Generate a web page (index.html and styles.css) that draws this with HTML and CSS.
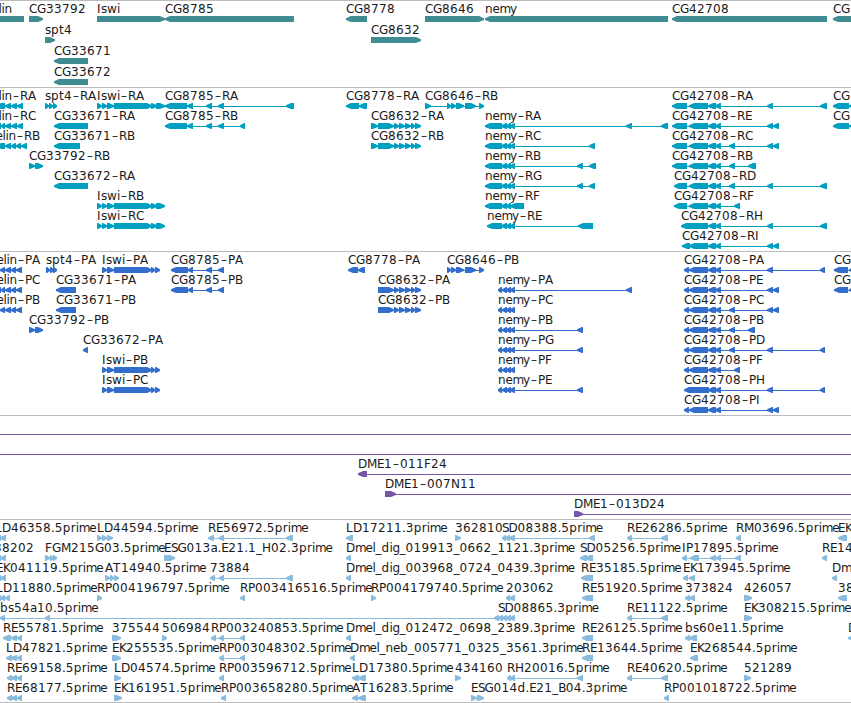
FILE: index.html
```html
<!DOCTYPE html>
<html lang="en">
<head>
<meta charset="utf-8">
<title>Genome tracks</title>
<link rel="stylesheet" href="styles.css">
</head>
<body>
<main class="browser" id="browser"></main>
<script src="tracks.js"></script>
</body>
</html>
```
FILE: styles.css
```css
body {
  margin: 0;
  background: #fff;
  overflow: hidden;
}

.browser {
  display: flex;
  flex-direction: column;
  width: 851px;
  border-bottom: 1px solid #bbb;
}

.track {
  border-top: 1px solid #bbb;
}

.track svg {
  display: block;
  overflow: visible;
}

.track text {
  font-family: "DejaVu Sans", sans-serif;
  font-size: 12px;
  fill: #1a1a1a;
}

.gene { fill: #408c93; }
.transcript { fill: #009fbf; }
.protein { fill: #336ecc; }
.clone { fill: #7755a8; }
.est { fill: #88bbdd; }
```
FILE: tracks.js
```js
// Each row lists features as "label@labelStart direction blocks".
const exonsR = '708-716,715-721';
const iswiR = '97-102,102-107,107-114,114-152,151-157,156-165';
const iswiP = '102-107,107-114,114-152,151-155,155-160';
const cg8632 = '378-394,394-399,399-405,405-411,411-415,415-421';
const nemyR = '485-502,501-507,506-511,510-515';
const nemyP = '498-502,502-507,506-511,510-515';
const cgR = '672-687,689-708,' + exonsR;
const cgD = '674-687,689-708,' + exonsR;
const cgP = '684-689,689-708,' + exonsR;

const tracks = [
  { kind: 'gene', pitch: 21, height: 86, rows: [
    ['elin@-8.5 l -10-24', 'CG33792@29 r 29-43', 'Iswi@97 r 97-165', 'CG8785@165 l 165-294', 'CG8778@346 l 346-367', 'CG8646@425 r 425-484', 'nemy@485 l 485-668', 'CG42708@672 l 672-827', 'CG@833 l 833-860'],
    ['spt4@45 r 45-55', 'CG8632@371 r 371-421'],
    ['CG33671@54 l 54-88'],
    ['CG33672@54 l 54-88']
  ] },
  { kind: 'transcript', pitch: 20, height: 163, rows: [
    ['elin-RA@-8.5 l -4-5,5-11,11-17,17-23', 'spt4-RA@45 r 45-49,49-53,53-57', 'Iswi-RA@97 r ' + iswiR, 'CG8785-RA@165 l 165-187,187-193,206-212,218-224,286-294', 'CG8778-RA@346 l 346-359,359-367', 'CG8646-RB@425 r 425-431,447-451,451-456,456-464,465-476,479-484', `CG42708-RA@672 l ${cgR},767-773,820-827`, 'CG@833 l 833-849,849-860'],
    ['elin-RC@-8.5 l -4-1,1-5,5-11,11-17,17-23', 'CG33671-RA@54 l 54-88', 'CG8785-RB@165 l 165-187,187-193,206-212,218-224,240-245', 'CG8632-RA@371 r 371-378,' + cg8632, `nemy-RA@485 l ${nemyR},626-632,661-668`, `CG42708-RE@672 l ${cgR},767-773,773-779`, 'CG@833 l 833-849,849-860'],
    ['elin-RB@-4.5 l -4-5,5-11,11-16,16-21,21-27', 'CG33671-RB@54 l 54-80', 'CG8632-RB@371 r 371-378,' + cg8632, `nemy-RC@485 l ${nemyR},589-595`, `CG42708-RC@672 l ${cgR},729-735,767-773,773-779`],
    ['CG33792-RB@29 r 29-35,35-43', `nemy-RB@485 l ${nemyR},577-583,589-596`, `CG42708-RB@672 l ${cgR},729-735,748-756`],
    ['CG33672-RA@54 l 54-88', `nemy-RG@485 l ${nemyR},577-583,589-595`, `CG42708-RD@674 l ${cgD},729-735,767-773,820-827`],
    ['Iswi-RB@97 r ' + iswiR, 'nemy-RF@485 l 485-502,501-507,506-511,510-524', `CG42708-RF@674 l ${cgD},734-740`],
    ['Iswi-RC@97 r ' + iswiR, 'nemy-RE@487 l 487-502,501-507,506-511,510-515,578-593', `CG42708-RH@681 l 681-708,${exonsR},767-773,820-827`],
    [`CG42708-RI@682 l 682-690,689-708,${exonsR},767-773,773-779`]
  ] },
  { kind: 'protein', pitch: 20, height: 163, rows: [
    ['elin-PA@-3.5 l -4-0,0-5,5-11,11-16,16-22', 'spt4-PA@46 r 46-50,50-54,53-57', 'Iswi-PA@102 r ' + iswiP, 'CG8785-PA@171 l 171-188,188-193,206-212,218-224', 'CG8778-PA@348 l 348-358,358-365', 'CG8646-PB@447 r 447-451,451-456,456-464,465-476,479-484', `CG42708-PA@684 l ${cgP},767-773,820-825`, 'CG@834 l 834-848,849-860'],
    ['elin-PC@-3.5 l -4-1,1-5,5-11,11-16,16-22', 'CG33671-PA@56 l 56-76', 'CG8785-PB@171 l 171-188,188-193,206-212,218-224', 'CG8632-PA@378 r ' + cg8632, `nemy-PA@498 l ${nemyP},626-632`, `CG42708-PE@684 l ${cgP},767-773,773-779`, 'CG@834 l 834-848,849-860'],
    ['elin-PB@-3.5 l -4-0,0-5,5-11,11-16,16-22', 'CG33671-PB@56 l 56-76', 'CG8632-PB@378 r ' + cg8632, `nemy-PC@498 l ${nemyP}`, `CG42708-PC@684 l ${cgP},729-735,767-773,773-779`],
    ['CG33792-PB@29 r 29-35,35-43', `nemy-PB@498 l ${nemyP},577-583`, `CG42708-PB@684 l ${cgP},729-735,748-755`],
    ['CG33672-PA@83 l 83-88', `nemy-PG@498 l ${nemyP},577-583`, `CG42708-PD@684 l ${cgP},729-735,767-773,820-825`],
    ['Iswi-PB@102 r ' + iswiP, `nemy-PF@498 l ${nemyP}`, `CG42708-PF@684 l ${cgP},734-740`],
    ['Iswi-PC@102 r ' + iswiP, `nemy-PE@498 l ${nemyP},577-583`, `CG42708-PH@684 l 684-709,${exonsR},767-773,820-825`],
    [`CG42708-PI@684 l ${cgP},767-773,773-779`]
  ] },
  { kind: 'clone', pitch: 20, height: 103, rows: [
    ['@0 l -20--10,870-880'],
    ['@0 l -20--10,870-880'],
    ['DME1-011F24@358 l 358-367,870-880'],
    ['DME1-007N11@385 r 385-396,870-880'],
    ['DME1-013D24@574 r 574-583,870-880']
  ] },
  { kind: 'est', pitch: 20, height: 182, rows: [
    ['LD46358.5prime@-5 l -4-1,0-6', 'LD44594.5prime@97 r 97-102,102-107,107-113', 'RE56972.5prime@208 l 208-214,219-224,286-293', 'LD17211.3prime@346 l 346-353', '362810@455 r 455-461', 'SD08388.5prime@502 l 502-506,505-510,509-515,589-595', 'RE26286.5prime@627 l 627-632,661-668', 'RM03696.5prime@736 l 736-741', 'EK@838 l 838-847'],
    ['38202@-6 l -4-1,0-6', 'FGM215G03.5prime@45 r 45-50,50-54,53-57', 'ESG013a.E21.1_H02.3prime@164 r 164-175', 'Dmel_dig_019913_0662_1121.3prime@346 l 346-351', 'SD05256.5prime@580 l 580-587,585-593', 'IP17895.5prime@682 l 682-687,690-699,710-716,716-721,735-741', 'RE14@822 l 822-827'],
    ['EK041119.5prime@-4 l -4-1,0-6', 'AT14940.5prime@105 r 105-110,110-114,114-119', '73884@210 l 210-215,219-224,286-293', 'Dmel_dig_003968_0724_0439.3prime@346 l 346-351', 'RE35185.5prime@581 l 581-593', 'EK173945.5prime@683 l 683-688,689-695', 'Dm@832 l 832-837'],
    ['LD11880.5prime@-4 l -4-1,0-5,5-10', 'RP004196797.5prime@97 r 97-102', 'RP003416516.5prime@240 l 240-245', 'RP004179740.5prime@371 r 371-376', '203062@506 l 506-510,509-515', 'RE51920.5prime@582 l 582-593', '373824@685 l 685-690,689-695', '426057@744 r 744-752', '38@838 l 838-847'],
    ['bs54a10.5prime@0 l 0-5,45-50,494-499', 'SD08865.3prime@498 l 498-503,502-507,506-511,510-515', 'RE11122.5prime@627 l 627-632,661-668', 'EK308215.5prime@744 r 744-752'],
    ['RE55781.5prime@3 l 3-11,11-17,17-22', '375544@112 r 112-121', '506984@162 r 162-167', 'RP003240853.5prime@211 l 211-216,219-224,240-245', 'Dmel_dig_012472_0698_2389.3prime@346 l 346-351', 'RE26125.5prime@582 l 582-593', 'bs60e11.5prime@685 l 685-690,689-697', 'D@848 l 848-860'],
    ['LD47821.5prime@6 l 6-12,11-17,17-22', 'EK255535.5prime@112 r 112-121', 'RP003048302.5prime@219 l 219-224,240-245', 'Dmel_neb_005771_0325_3561.3prime@350 l 350-355', 'RE13644.5prime@582 l 582-593', 'EK268544.5prime@690 l 690-698'],
    ['RE69158.5prime@7 l 7-12,11-17,17-22', 'LD04574.5prime@114 r 114-121', 'RP003596712.5prime@219 l 219-224', 'LD17380.5prime@352 l 352-359,358-366', '434160@455 r 455-461', 'RH20016.5prime@507 l 507-511,510-515,577-583', 'RE40620.5prime@627 l 627-632,661-668', '521289@744 r 744-751'],
    ['RE68177.5prime@7 l 7-12,11-17,17-22', 'EK161951.5prime@114 r 114-122', 'RP003658280.5prime@221 l 221-226', 'AT16283.5prime@352 l 352-358,358-366', 'ESG014d.E21_B04.3prime@471 r 471-477,477-484', 'RP001018722.5prime@664 l 664-669']
  ] }
];

const advance = { C: 8, G: 9, R: 8, P: 7, E: 7, F: 7, B: 7.5, A: 8, D: 9, L: 7, S: 6.5, I: 4, K: 7, M: 10, N: 9, H: 9, T: 8,
  l: 3, i: 3, m: 10.5, r: 5, t: 5, s: 6, e: 7, a: 7, y: 7, g: 7, w: 10, n: 7.5, '.': 3.8, _: 6, '-': 8 };

// Hyphens are drawn as the wider dash.
function label(name, start, y) {
  let x = start;
  const xs = [...name].map(ch => {
    const at = ch === '-' ? x + 1 : x;
    x += advance[ch] || 8;
    return at;
  });
  return `<text x="${xs.join(' ')}" y="${y}">${name.replace(/-/g, '–')}</text>`;
}

function block(a, b, dir, y) {
  const w = b - a;
  const head = Math.min(w - 1, 5);
  const s = dir === 'l' ? 1 : -1;
  const tip = dir === 'l' ? a : b;
  const flat = dir === 'l' ? b : a;
  const neck = tip + s * head;
  return `<polygon points="${tip},${y + 2.2} ${neck},${y} ${flat},${y} ${flat},${y + 6} ${neck},${y + 6} ${tip},${y + 4}"/>`;
}

function feature(text, y) {
  const [, name, start, dir, spec] = text.match(/^(.*)@(\S+) (\w) (.*)$/);
  const blocks = spec.split(',').map(s => s.match(/^(-?\d+)-(-?\d+)$/).slice(1).map(Number));
  const from = blocks[0][0] + 1;
  const to = blocks[blocks.length - 1][1] - 1;
  return `<rect x="${from}" y="${y + 18}" width="${to - from}" height="1"/>` +
    blocks.map(([a, b]) => block(a, b, dir, y + 15)).join('') +
    (name ? label(name, +start, y + 12) : '');
}

document.getElementById('browser').innerHTML = tracks.map(t =>
  `<section class="track"><svg class="${t.kind}" width="851" height="${t.height}">` +
  t.rows.map((row, i) => row.map(f => feature(f, i * t.pitch)).join('')).join('') +
  '</svg></section>').join('');
```
